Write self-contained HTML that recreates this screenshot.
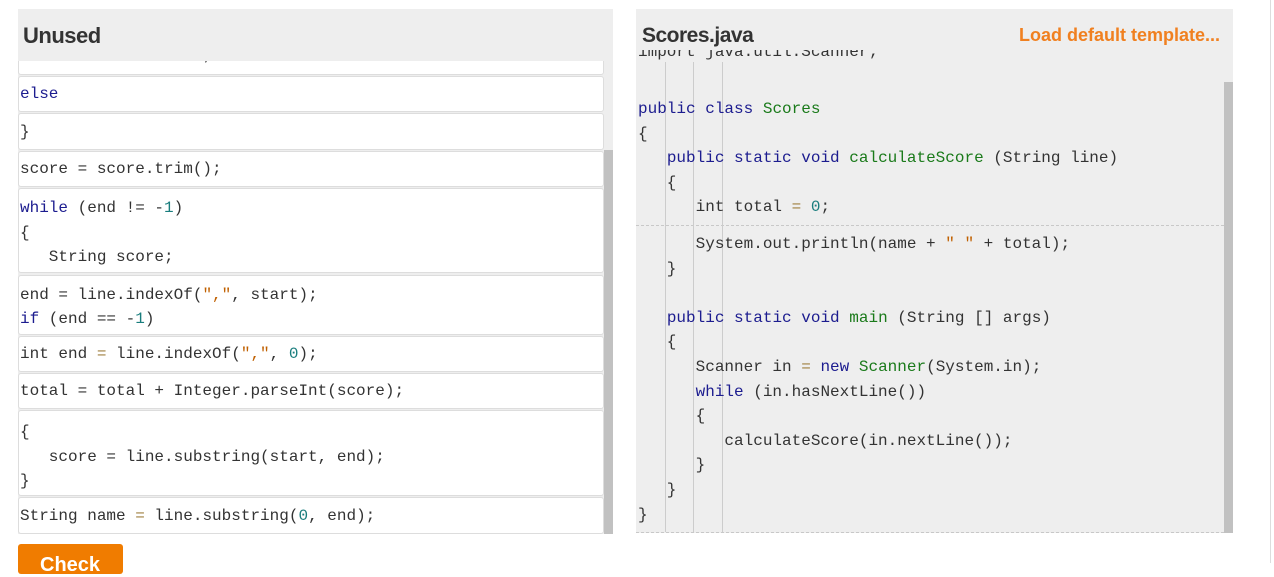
<!DOCTYPE html><html><head><style>
body{margin:0;width:1274px;height:563px;background:#fff;position:relative;overflow:hidden;font-family:"Liberation Mono",monospace;}
.mono{font-family:"Liberation Mono",monospace;font-size:16px;color:#333;white-space:pre;}
.h{position:absolute;font-family:"Liberation Sans",sans-serif;font-weight:bold;color:#333;}
.blk{position:absolute;left:0;width:584px;background:#fff;border:1px solid #ddd;border-radius:3px;overflow:hidden;}
.blk div{position:absolute;left:1px;}
.k{color:#1c1c8f}.t{color:#1a7a1a}.n{color:#197d7d}.s{color:#c06000}.o{color:#a08040}
.ln{position:absolute;left:638px;}
</style></head><body>
<div style="position:absolute;left:18px;top:9px;width:595px;height:52px;background:#eee"></div>
<div class="h" style="left:23px;top:23px;font-size:22px;letter-spacing:-0.5px">Unused</div>
<div style="position:absolute;left:18px;top:61px;width:595px;height:473px;background:#eee;overflow:hidden">
<div style="position:absolute;left:586px;top:89px;width:9px;height:384px;background:#c1c1c1"></div>
<div class="blk mono" style="top:-11px;height:23px"><div style="top:-4px">int start = end + 1;</div></div>
<div class="blk mono" style="top:15px;height:34px"><div style="top:8px"><span class="k">else</span></div></div>
<div class="blk mono" style="top:52px;height:35px"><div style="top:9px">}</div></div>
<div class="blk mono" style="top:90px;height:34px"><div style="top:8px">score = score.trim();</div></div>
<div class="blk mono" style="top:127px;height:83px"><div style="top:7px;line-height:24.5px"><span class="k">while</span> (end != -<span class="n">1</span>)
{
   String score;</div></div>
<div class="blk mono" style="top:214px;height:58px"><div style="top:7px;line-height:24px">end = line.indexOf(<span class="s">","</span>, start);
<span class="k">if</span> (end == -<span class="n">1</span>)</div></div>
<div class="blk mono" style="top:275px;height:34px"><div style="top:8px">int end <span class="o">=</span> line.indexOf(<span class="s">","</span>, <span class="n">0</span>);</div></div>
<div class="blk mono" style="top:312px;height:34px"><div style="top:8px">total = total + Integer.parseInt(score);</div></div>
<div class="blk mono" style="top:349px;height:84px"><div style="top:9px;line-height:24.5px">{
   score = line.substring(start, end);
}</div></div>
<div class="blk mono" style="top:436px;height:35px"><div style="top:9px">String name <span class="o">=</span> line.substring(<span class="n">0</span>, end);</div></div>
</div>

<div style="position:absolute;left:18px;top:544px;width:105px;height:30px;background:#f07c00;border-radius:3px"></div>
<div class="h" style="left:40px;top:554px;color:#fff;font-size:20px">Check</div>

<div style="position:absolute;left:636px;top:9px;width:597px;height:524px;background:#eee"></div>
<div class="h" style="left:642px;top:24px;font-size:21px;letter-spacing:-0.5px">Scores.java</div>
<div class="h" style="right:54px;top:25px;font-size:18px;color:#f08020">Load default template...</div>
<div style="position:absolute;left:1224px;top:82px;width:9px;height:451px;background:#c1c1c1"></div>
<div style="position:absolute;left:636px;top:225px;width:588px;border-top:1px dashed #c8c8c8"></div>
<div style="position:absolute;left:636px;top:532px;width:588px;border-top:1px dashed #c8c8c8"></div>
<div style="position:absolute;left:665px;top:62px;width:1px;height:470px;background:#ccc"></div>
<div style="position:absolute;left:693px;top:62px;width:1px;height:470px;background:#ccc"></div>
<div style="position:absolute;left:722px;top:62px;width:1px;height:470px;background:#ccc"></div>
<div style="position:absolute;left:636px;top:50px;width:588px;height:14px;overflow:hidden"><div class="mono" style="position:absolute;left:2px;top:-7px">import java.util.Scanner;</div></div>
<div class="mono ln" style="top:97px;line-height:24.6px"><span class="k">public</span> <span class="k">class</span> <span class="t">Scores</span>
{
   <span class="k">public</span> <span class="k">static</span> <span class="k">void</span> <span class="t">calculateScore</span> (String line)
   {
      int total <span class="o">=</span> <span class="n">0</span>;</div>
<div class="mono ln" style="top:232px;line-height:24.6px">      System.out.println(name + <span class="s">" "</span> + total);
   }

   <span class="k">public</span> <span class="k">static</span> <span class="k">void</span> <span class="t">main</span> (String [] args)
   {
      Scanner in <span class="o">=</span> <span class="k">new</span> <span class="t">Scanner</span>(System.in);
      <span class="k">while</span> (in.hasNextLine())
      {
         calculateScore(in.nextLine());
      }
   }
}</div>
<div style="position:absolute;left:1270px;top:0;width:1px;height:563px;background:#ddd"></div>
</body></html>
